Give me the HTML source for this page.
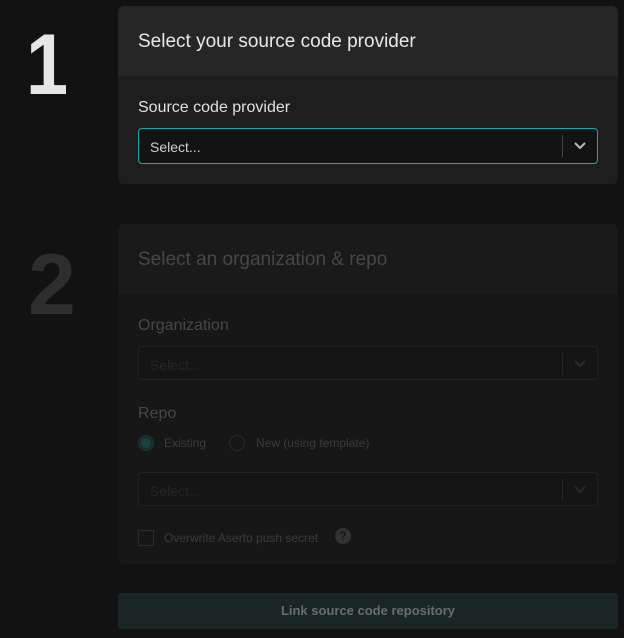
<!DOCTYPE html>
<html><head><style>
body{margin:0;width:624px;height:638px;background:#121212;font-family:"Liberation Sans",sans-serif;position:relative;overflow:hidden}
.a{position:absolute}
.num{font-weight:bold;font-size:86px;line-height:1}
.sel{position:absolute;left:138px;width:460px;height:34px;border-radius:4px;box-sizing:border-box}
.sel span{position:absolute;left:11px;top:10px;font-size:14px}
.sel i{position:absolute;right:34px;top:6px;width:1px;height:22px}
.sel svg{position:absolute;right:10px;top:11px}
</style></head><body>
<div class="a num" style="left:26px;top:22px;color:#e6e6e6;transform:scaleX(0.88);transform-origin:left">1</div>
<div class="a" style="left:118px;top:6px;width:500px;height:178px;background:#1e1e1e;border-radius:6px;overflow:hidden">
 <div style="height:70px;background:#262626"></div>
</div>
<div class="a" style="left:138px;top:31px;font-size:19px;color:#e8e8e8">Select your source code provider</div>
<div class="a" style="left:138px;top:99px;font-size:16px;color:#e0e0e0">Source code provider</div>
<div class="sel" style="top:128px;height:36px;background:#131313;border:1px solid #1fa6a6"><span style="color:#cfcfcf">Select...</span><i style="background:#444"></i><svg width="14" height="12" viewBox="0 0 14 12"><path d="M2 3l5 5 5-5" stroke="#bbb" stroke-width="2" fill="none"/></svg></div>

<div class="a num" style="left:28px;top:242px;color:#2e2e2e">2</div>
<div class="a" style="left:118px;top:224px;width:500px;height:340px;background:#171717;border-radius:6px;overflow:hidden">
 <div style="height:70px;background:#1a1a1a"></div>
</div>
<div class="a" style="left:138px;top:249px;font-size:19px;color:#474747">Select an organization &amp; repo</div>
<div class="a" style="left:138px;top:317px;font-size:16px;color:#474747">Organization</div>
<div class="sel" style="top:346px;background:#151515;border:1px solid #222"><span style="color:#262626">Select...</span><i style="background:#252525"></i><svg width="14" height="12" viewBox="0 0 14 12"><path d="M2 3l5 5 5-5" stroke="#2a2a2a" stroke-width="2" fill="none"/></svg></div>
<div class="a" style="left:138px;top:405px;font-size:16px;color:#474747">Repo</div>
<div class="a" style="left:138px;top:435px;width:14px;height:14px;border-radius:50%;border:1px solid #1c3535;background:#1a2a2a"><div style="margin:2px;width:10px;height:10px;border-radius:50%;background:#1d4040"></div></div>
<div class="a" style="left:164px;top:436px;font-size:12px;color:#3c3c3c">Existing</div>
<div class="a" style="left:229px;top:435px;width:16px;height:16px;border-radius:50%;border:1px solid #2c2c2c;box-sizing:border-box"></div>
<div class="a" style="left:256px;top:436px;font-size:12px;color:#3c3c3c">New (using template)</div>
<div class="sel" style="top:472px;background:#151515;border:1px solid #222"><span style="color:#262626">Select...</span><i style="background:#252525"></i><svg width="14" height="12" viewBox="0 0 14 12"><path d="M2 3l5 5 5-5" stroke="#2a2a2a" stroke-width="2" fill="none"/></svg></div>
<div class="a" style="left:138px;top:530px;width:16px;height:16px;border:1px solid #2c2c2c;box-sizing:border-box"></div>
<div class="a" style="left:164px;top:531px;font-size:12px;color:#3c3c3c">Overwrite Aserto push secret</div>
<div class="a" style="left:335px;top:528px;width:16px;height:16px;border-radius:50%;background:#333;color:#181818;font-size:12px;font-weight:bold;text-align:center;line-height:16px">?</div>
<div class="a" style="left:118px;top:593px;width:500px;height:36px;background:#1a2626;border-radius:3px;color:#6c6c6c;font-size:13px;font-weight:bold;text-align:center;line-height:36px">Link source code repository</div>
</body></html>
